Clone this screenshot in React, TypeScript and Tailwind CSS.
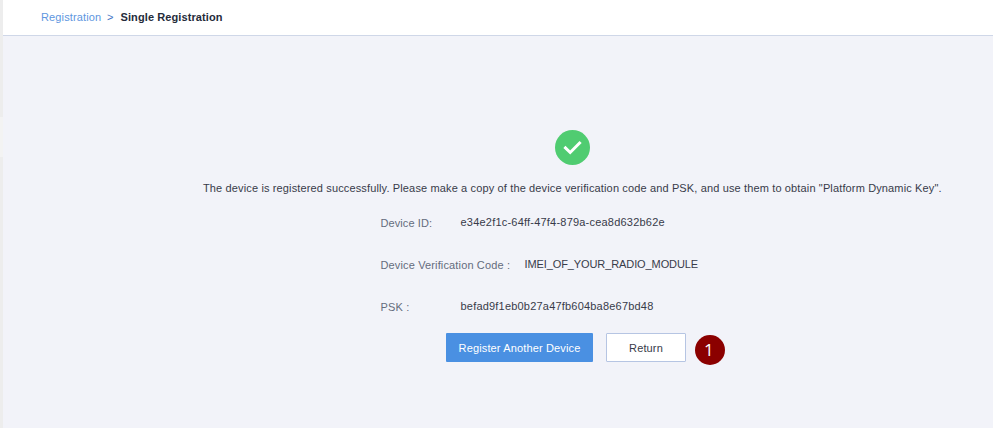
const rows = [
  { label: 'Device ID:', value: 'e34e2f1c-64ff-47f4-879a-cea8d632b62e', cell: 'w-[80px]', labelStyle: 'tracking-[0.08px]', valueStyle: 'tracking-[0.21px]' },
  { label: 'Device Verification Code :', value: 'IMEI_OF_YOUR_RADIO_MODULE', cell: 'w-[144px]', labelStyle: 'tracking-[0.14px]', valueStyle: 'tracking-[-0.1px]' },
  { label: 'PSK :', value: 'befad9f1eb0b27a47fb604ba8e67bd48', cell: 'w-[80px]', labelStyle: 'tracking-[0.2px]', valueStyle: 'tracking-[0.2px]' },
];

export default function App() {
  return (
    <div className="flex h-[428px] w-[993px] overflow-hidden bg-[#f2f3f9] font-['Liberation_Sans',Arial,sans-serif] text-[11px] leading-[14px] tracking-[0.138px] whitespace-nowrap text-[#383b49]">
      <aside className="w-[3px] shrink-0 bg-[#ededed] pt-[117px]">
        <div className="h-10 bg-[#f3f3f3]" />
      </aside>
      <div className="flex min-w-0 flex-1 flex-col">
        <header className="flex h-9 shrink-0 items-center border-b border-[#cfd7e8] bg-white pb-px pl-[38px]">
          <nav className="flex items-center">
            <a className="w-[66px] text-[#5e96e0]">Registration</a>
            <span className="w-[13.5px] text-[#3f74c4]">&gt;</span>
            <span className="font-bold tracking-[0.1px] text-[#252b3a]">Single Registration</span>
          </nav>
        </header>
        <main className="flex flex-1 flex-col">
          <svg className="mt-[94px] ml-[552px] h-[35px] w-[35px]" viewBox="0 0 35 35" fill="none">
            <circle cx="17.5" cy="17.5" r="17.5" fill="#50cc71" />
            <path d="M9.4 16.9l5.8 5.6L25.6 12" stroke="white" strokeWidth="3" />
          </svg>
          <p className="mt-4 ml-[200px]">
            The device is registered successfully. Please make a copy of the device verification code and PSK, and use them to obtain "Platform Dynamic Key".
          </p>
          <dl className="mt-[21px] ml-[377.5px] flex flex-col gap-7">
            {rows.map((r) => (
              <div key={r.label} className="flex">
                <dt className={`${r.cell} ${r.labelStyle} text-[#646c7d]`}>{r.label}</dt>
                <dd className={`-mt-px ${r.valueStyle}`}>{r.value}</dd>
              </div>
            ))}
          </dl>
          <div className="mt-[19px] ml-[443px] flex">
            <button className="h-[29px] w-[147px] rounded-[1px] bg-[#4a90e2] tracking-[0.138px] text-white">Register Another Device</button>
            <button className="ml-[13px] h-[29px] w-[80px] rounded-[1px] border border-[#b6c5e3] bg-white tracking-[0.138px]">Return</button>
            <span className="mt-[2px] ml-[9px] flex h-[30px] w-[30px] items-center justify-center rounded-full bg-[#8b0000] pr-[2px] pb-px font-['Open_Sans',sans-serif] text-[17px] font-medium text-white">1</span>
          </div>
        </main>
      </div>
    </div>
  );
}
